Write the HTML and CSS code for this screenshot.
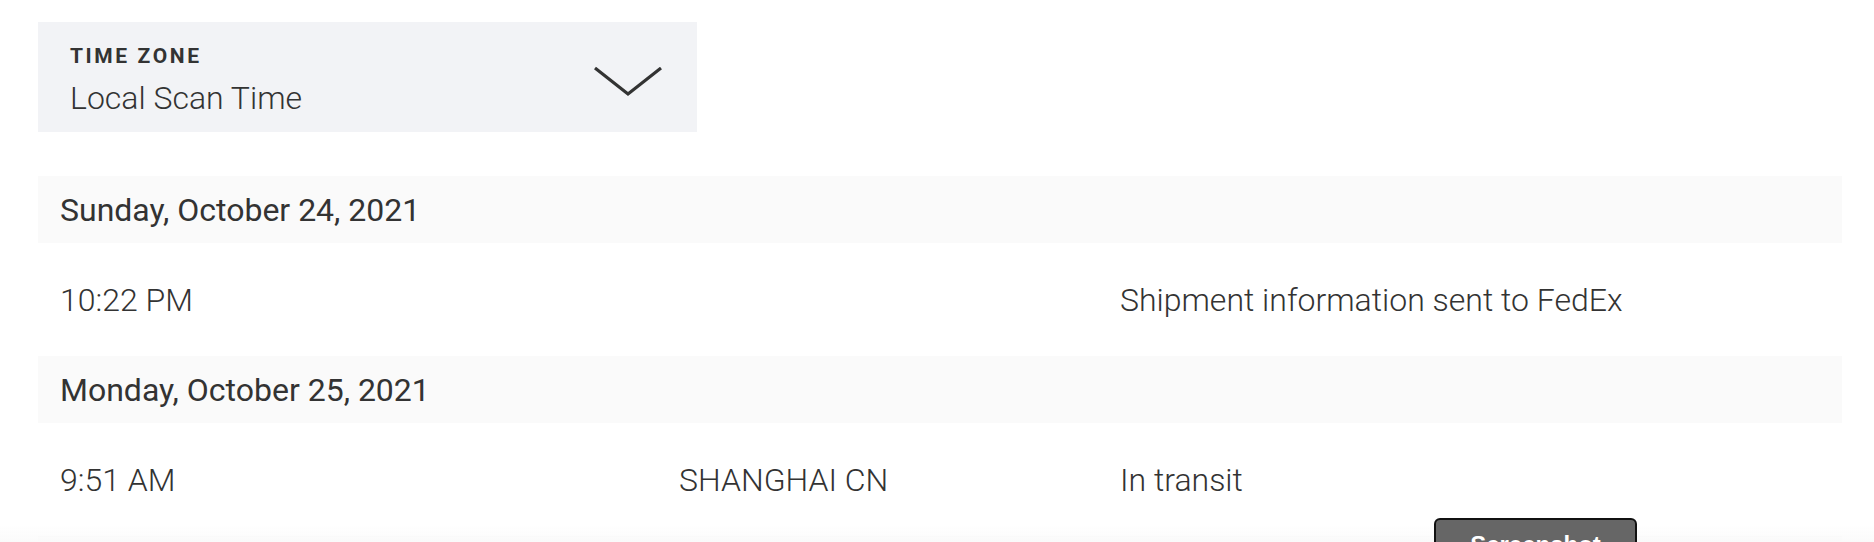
FILE: index.html
```html
<!DOCTYPE html>
<html lang="en">
<head>
<meta charset="utf-8">
<title>Travel history</title>
<link rel="stylesheet" href="styles.css">
</head>
<body>
<main class="page">
  <div class="tz-select">
    <div class="tz-text">
      <span class="tz-label">TIME ZONE</span>
      <span class="tz-value">Local Scan Time</span>
    </div>
    <svg class="tz-chevron" width="70" height="32" viewBox="0 0 70 32" aria-hidden="true">
      <polyline points="2,3 35,29 68,3" fill="none" stroke="#333" stroke-width="3.2"/>
    </svg>
  </div>

  <section class="history">
    <div class="date-row">Sunday, October 24, 2021</div>
    <div class="event-row">
      <span class="col-time">10:22 PM</span>
      <span class="col-loc"></span>
      <span class="col-desc">Shipment information sent to FedEx</span>
    </div>
    <div class="date-row">Monday, October 25, 2021</div>
    <div class="event-row">
      <span class="col-time">9:51 AM</span>
      <span class="col-loc">SHANGHAI CN</span>
      <span class="col-desc">In transit</span>
    </div>
    <div class="date-row"></div>
  </section>
</main>
<div class="fade"></div>
<button class="shot-btn" type="button">Screenshot</button>
</body>
</html>
```

FILE: styles.css
```css
html, body {
  margin: 0;
  padding: 0;
  background: #ffffff;
  overflow: hidden;
}

body {
  font-family: Roboto, "Liberation Sans", Arial, sans-serif;
  color: #333333;
}

.page {
  padding: 22px 32px 0 38px;
}

.tz-select {
  width: 659px;
  height: 110px;
  box-sizing: border-box;
  background: #f2f3f6;
  display: flex;
  align-items: flex-start;
  justify-content: space-between;
  padding: 22px 34px 0 32px;
}

.tz-text {
  display: flex;
  flex-direction: column;
}

.tz-label {
  font-size: 21px;
  font-weight: 700;
  letter-spacing: 2.6px;
  line-height: 24px;
  color: #333;
}

.tz-value {
  margin-top: 10px;
  font-size: 32px;
  font-weight: 300;
  line-height: 40px;
  color: #333;
}

.tz-chevron {
  display: block;
  margin-top: 21px;
}

.history {
  margin-top: 44px;
  display: flex;
  flex-direction: column;
}

.date-row {
  height: 67px;
  background: #fafafa;
  display: flex;
  align-items: center;
  padding-left: 22px;
  font-size: 32px;
  font-weight: 400;
  color: #333;
}

.event-row {
  height: 113px;
  display: grid;
  grid-template-columns: 619px 441px 1fr;
  align-items: center;
  padding-left: 22px;
  font-size: 32px;
  font-weight: 300;
  color: #333;
}

.fade {
  position: fixed;
  left: 0;
  right: 0;
  bottom: 0;
  height: 18px;
  background: linear-gradient(to bottom, rgba(255,255,255,0), rgba(250,250,250,0.9));
  pointer-events: none;
}

.shot-btn {
  position: fixed;
  left: 1434px;
  top: 518px;
  width: 203px;
  height: 44px;
  box-sizing: border-box;
  border: 2px solid #111;
  border-radius: 6px;
  background: #666666;
  color: #ffffff;
  font-family: "Liberation Sans", Arial, sans-serif;
  font-weight: 700;
  font-size: 24px;
  padding: 10px 0 0;
  text-align: center;
  line-height: 28px;
}
```
